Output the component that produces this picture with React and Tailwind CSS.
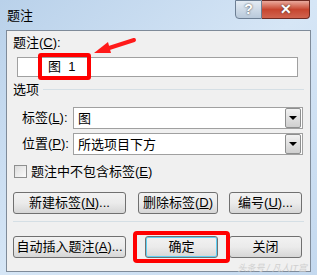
import React from "react";

const F = { fontFamily: '"Liberation Sans", "Noto Sans CJK SC", sans-serif' };

const Btn = ({ children, className = "" }) => (
  <div
    className={`h-[22px] flex items-center justify-center border border-[#707070] rounded-[3px] bg-gradient-to-b from-[#f2f2f2] via-[#ebebeb] to-[#d6d6d6] text-[13px] text-black ${className}`}
  >
    {children}
  </div>
);

const Select = ({ value }) => (
  <div className="flex-1 h-[22px] flex items-center border border-[#a0a0a0] bg-white">
    <span className="flex-1 pl-1 text-[13px] leading-none">{value}</span>
    <div className="w-[16px] h-[20px] mr-[1px] flex items-center justify-center border border-[#8e8f8f] rounded-[2px] bg-gradient-to-b from-[#f2f2f2] to-[#cfcfcf]">
      <div className="w-0 h-0 border-l-[4px] border-r-[4px] border-t-[4px] border-l-transparent border-r-transparent border-t-black" />
    </div>
  </div>
);

const App = () => {
  return (
    <div
      className="w-[317px] h-[275px] relative overflow-hidden bg-gradient-to-br from-[#b9d1ea] via-[#d6e6f6] to-[#c4d9ef] flex flex-col"
      style={F}
    >
      {/* title bar */}
      <div className="h-[30px] flex items-start">
        <span className="pl-[7px] pt-[6px] text-[13px] text-black">题注</span>
        <div className="ml-auto mr-[7px] flex">
          <div className="w-[27px] h-[19px] flex items-center justify-center border border-[#6d7f94] rounded-bl-[4px] bg-gradient-to-b from-[#e4ecf4] to-[#b9c9da] text-white text-[14px] font-bold [text-shadow:0_0_2px_#333]">
            ?
          </div>
          <div className="w-[48px] h-[19px] flex items-center justify-center border border-l-0 border-[#6e2a22] rounded-br-[4px] bg-gradient-to-b from-[#e9a99c] via-[#c7452f] to-[#d0644f] text-white text-[14px] font-bold [text-shadow:0_0_2px_#333]">
            ✕
          </div>
        </div>
      </div>

      {/* client area */}
      <div className="ml-[6px] mr-[6px] mb-[3px] flex-1 border border-[#7f8b99] bg-[#f0f0f0] px-[6px] pt-[2px] text-[13px] text-black flex flex-col">
        <div>
          题注(<span className="underline">C</span>):
        </div>
        <div className="mt-[4px] ml-[4px] mr-[6px] h-[20px] border border-[#a0a0a0] bg-white" />

        <div className="mt-[3px] flex items-center gap-[4px]">
          <span>选项</span>
          <div className="flex-1 h-px bg-[#d5dfe5]" />
        </div>

        <div className="mt-[8px] flex items-center pl-[9px] pr-[1px]">
          <span className="w-[51px]">
            标签(<span className="underline">L</span>):
          </span>
          <Select value="图" />
        </div>
        <div className="mt-[4px] flex items-center pl-[9px] pr-[1px]">
          <span className="w-[51px]">
            位置(<span className="underline">P</span>):
          </span>
          <Select value="所选项目下方" />
        </div>

        <div className="mt-[7px] flex items-center gap-[4px] pl-[1px]">
          <div className="w-[13px] h-[13px] border border-[#8e8f8f] bg-gradient-to-br from-[#dcdcdc] to-[#fbfbfb]" />
          <span>
            题注中不包含标签(<span className="underline">E</span>)
          </span>
        </div>

        <div className="mt-[10px] flex pr-[2px]">
          <Btn className="w-[113px]">
            新建标签(<span className="underline">N</span>)...
          </Btn>
          <Btn className="ml-[12px] w-[80px]">
            删除标签(<span className="underline">D</span>)
          </Btn>
          <Btn className="ml-[11px] flex-1">
            编号(<span className="underline">U</span>)...
          </Btn>
        </div>

        <div className="mt-[7px] h-px bg-[#d5dfe5]" />

        <div className="mt-[14px] flex pr-[2px] items-center">
          <Btn className="w-[113px]">
            自动插入题注(<span className="underline">A</span>)...
          </Btn>
          <div className="ml-[12px] w-[80px] flex justify-end">
            <Btn className="w-[73px] border-[#3c7fb1] shadow-[inset_0_0_0_1px_#5fd0f4] from-[#eaf6fd] via-[#d9f0fc] to-[#bee6fd]">
              确定
            </Btn>
          </div>
          <Btn className="ml-[11px] flex-1">关闭</Btn>
        </div>
      </div>

      {/* input content with highlight */}
      <div className="absolute left-[38px] top-[53px] w-[53px] h-[27px] border-[4px] border-[#ff0000] rounded-[3px] flex items-center pl-[6px] text-[13px]">
        图&nbsp;&nbsp;1
      </div>

      {/* arrow */}
      <svg className="absolute left-[92px] top-[36px]" width="45" height="20" viewBox="0 0 45 20">
        <line x1="42" y1="4" x2="14" y2="13" stroke="#ff1a1a" strokeWidth="4" strokeLinecap="round" />
        <polygon points="2,17 16,6 19,17" fill="#ff1a1a" />
      </svg>

      {/* red box around OK */}
      <div className="absolute left-[133px] top-[231px] w-[97px] h-[32px] border-[4px] border-[#ff0000] rounded-[4px]" />

      <div className="absolute right-[10px] bottom-[2px] text-[9px] leading-none text-[#cfcfcf] italic">
        头条号 / 凡人IT宫
      </div>
    </div>
  );
};

export default App;
